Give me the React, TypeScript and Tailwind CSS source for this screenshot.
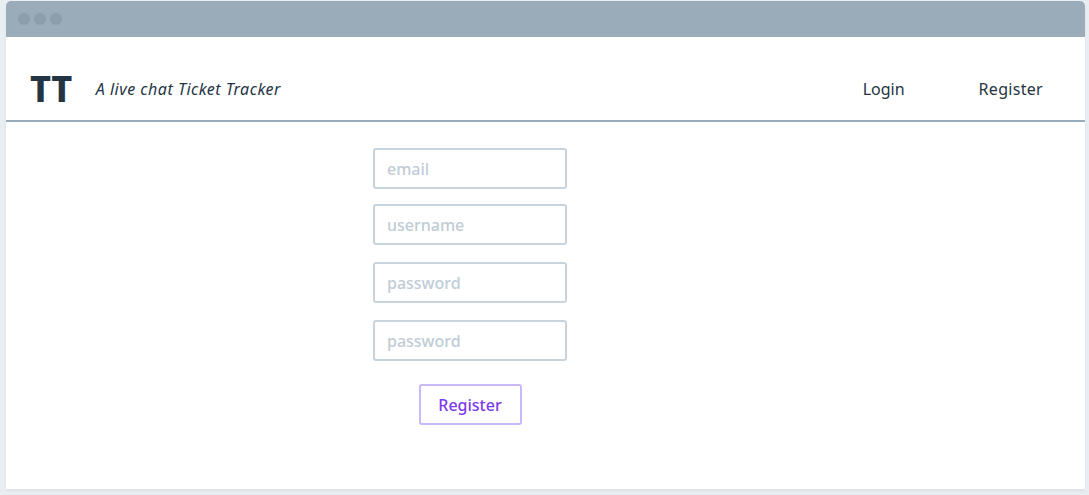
import React from "react";

export default function App() {
  const font = { fontFamily: '"Noto Sans", "DejaVu Sans", sans-serif' };
  return (
    <div className="w-[1089px] h-[495px] bg-[#e9eef2] pt-px pl-[6px] pr-[4px]" style={font}>
      <div className="w-[1079px] h-[488px] bg-white rounded-t-[5px] shadow-[0_2px_3px_rgba(0,0,0,0.06)] flex flex-col">
        <div className="h-[36px] bg-[#9aabb9] rounded-t-[5px] flex items-center gap-1 pl-3">
          <span className="w-3 h-3 rounded-full bg-[#8c9dac]" />
          <span className="w-3 h-3 rounded-full bg-[#8c9dac]" />
          <span className="w-3 h-3 rounded-full bg-[#8c9dac]" />
        </div>
        <div className="h-[85px] flex items-center border-b-2 border-[#9aabb9] pl-6 pr-[42px] pt-[21px]">
          <div className="text-[36px] font-extrabold text-[#243443] leading-none tracking-[-0.5px]">TT</div>
          <div className="ml-6 italic text-[16px] tracking-[0.5px] text-[#243443]">A live chat Ticket Tracker</div>
          <div className="ml-auto flex items-center gap-[74px] text-[16px] text-[#243443]">
            <span>Login</span>
            <span className="tracking-[0.3px]">Register</span>
          </div>
        </div>
        <div className="pl-[367px] pt-[26px]">
          <div className="w-[194px] flex flex-col">
            <input placeholder="email" className="h-[41px] border-2 border-[#c8d3dc] rounded-[3px] px-3 text-[16px] font-medium text-[#243443] placeholder:text-[#c0ccd6] outline-none" />
            <input placeholder="username" className="mt-[15px] h-[41px] border-2 border-[#c8d3dc] rounded-[3px] px-3 text-[16px] font-medium text-[#243443] placeholder:text-[#c0ccd6] outline-none" />
            <input type="password" placeholder="password" className="mt-[17px] h-[41px] border-2 border-[#c8d3dc] rounded-[3px] px-3 text-[16px] font-medium text-[#243443] placeholder:text-[#c0ccd6] outline-none" />
            <input type="password" placeholder="password" className="mt-[17px] h-[41px] border-2 border-[#c8d3dc] rounded-[3px] px-3 text-[16px] font-medium text-[#243443] placeholder:text-[#c0ccd6] outline-none" />
            <div className="flex justify-center mt-[23px]">
              <button className="w-[103px] h-[41px] border-2 border-[#c9b8fb] rounded-[3px] text-[16px] font-medium text-[#7c3aed] bg-white">Register</button>
            </div>
          </div>
        </div>
      </div>
    </div>
  );
}
